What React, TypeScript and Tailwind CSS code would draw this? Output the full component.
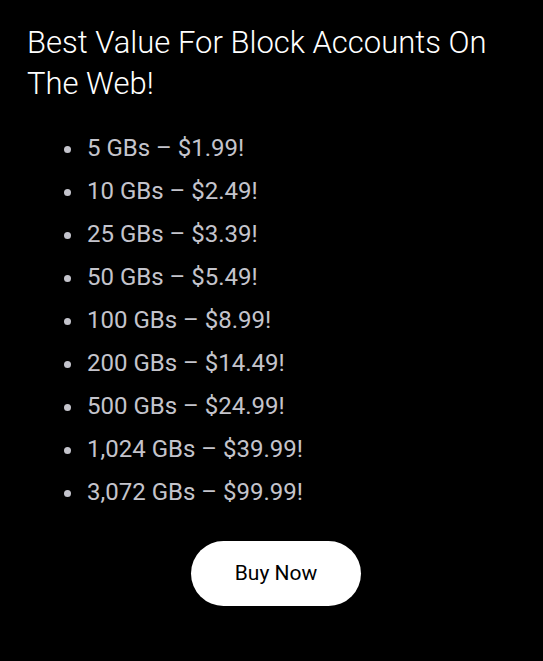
export default function App() {
  const items = [
    "5 GBs – $1.99!",
    "10 GBs – $2.49!",
    "25 GBs – $3.39!",
    "50 GBs – $5.49!",
    "100 GBs – $8.99!",
    "200 GBs – $14.49!",
    "500 GBs – $24.99!",
    "1,024 GBs – $39.99!",
    "3,072 GBs – $99.99!",
  ];
  return (
    <div className="w-[543px] h-[661px] bg-black font-['Roboto',sans-serif] overflow-hidden">
      <div className="pl-[27px] pr-4 pt-[22px]">
        <h1 className="text-[31px] leading-[41px] font-light text-white">
          Best Value For Block Accounts On The Web!
        </h1>
        <ul className="mt-[23px] pl-[58px] list-disc marker:text-[#c4c4cc] text-[#c4c4cc] text-[24px]">
          {items.map((t) => (
            <li key={t} className="h-[43px] leading-[43px] pl-[2px]">
              {t}
            </li>
          ))}
        </ul>
        <div className="flex justify-center mt-[27px]">
          <button className="w-[170px] h-[65px] rounded-full bg-white text-black text-[21px] ml-[-2px]">
            Buy Now
          </button>
        </div>
      </div>
    </div>
  );
}
